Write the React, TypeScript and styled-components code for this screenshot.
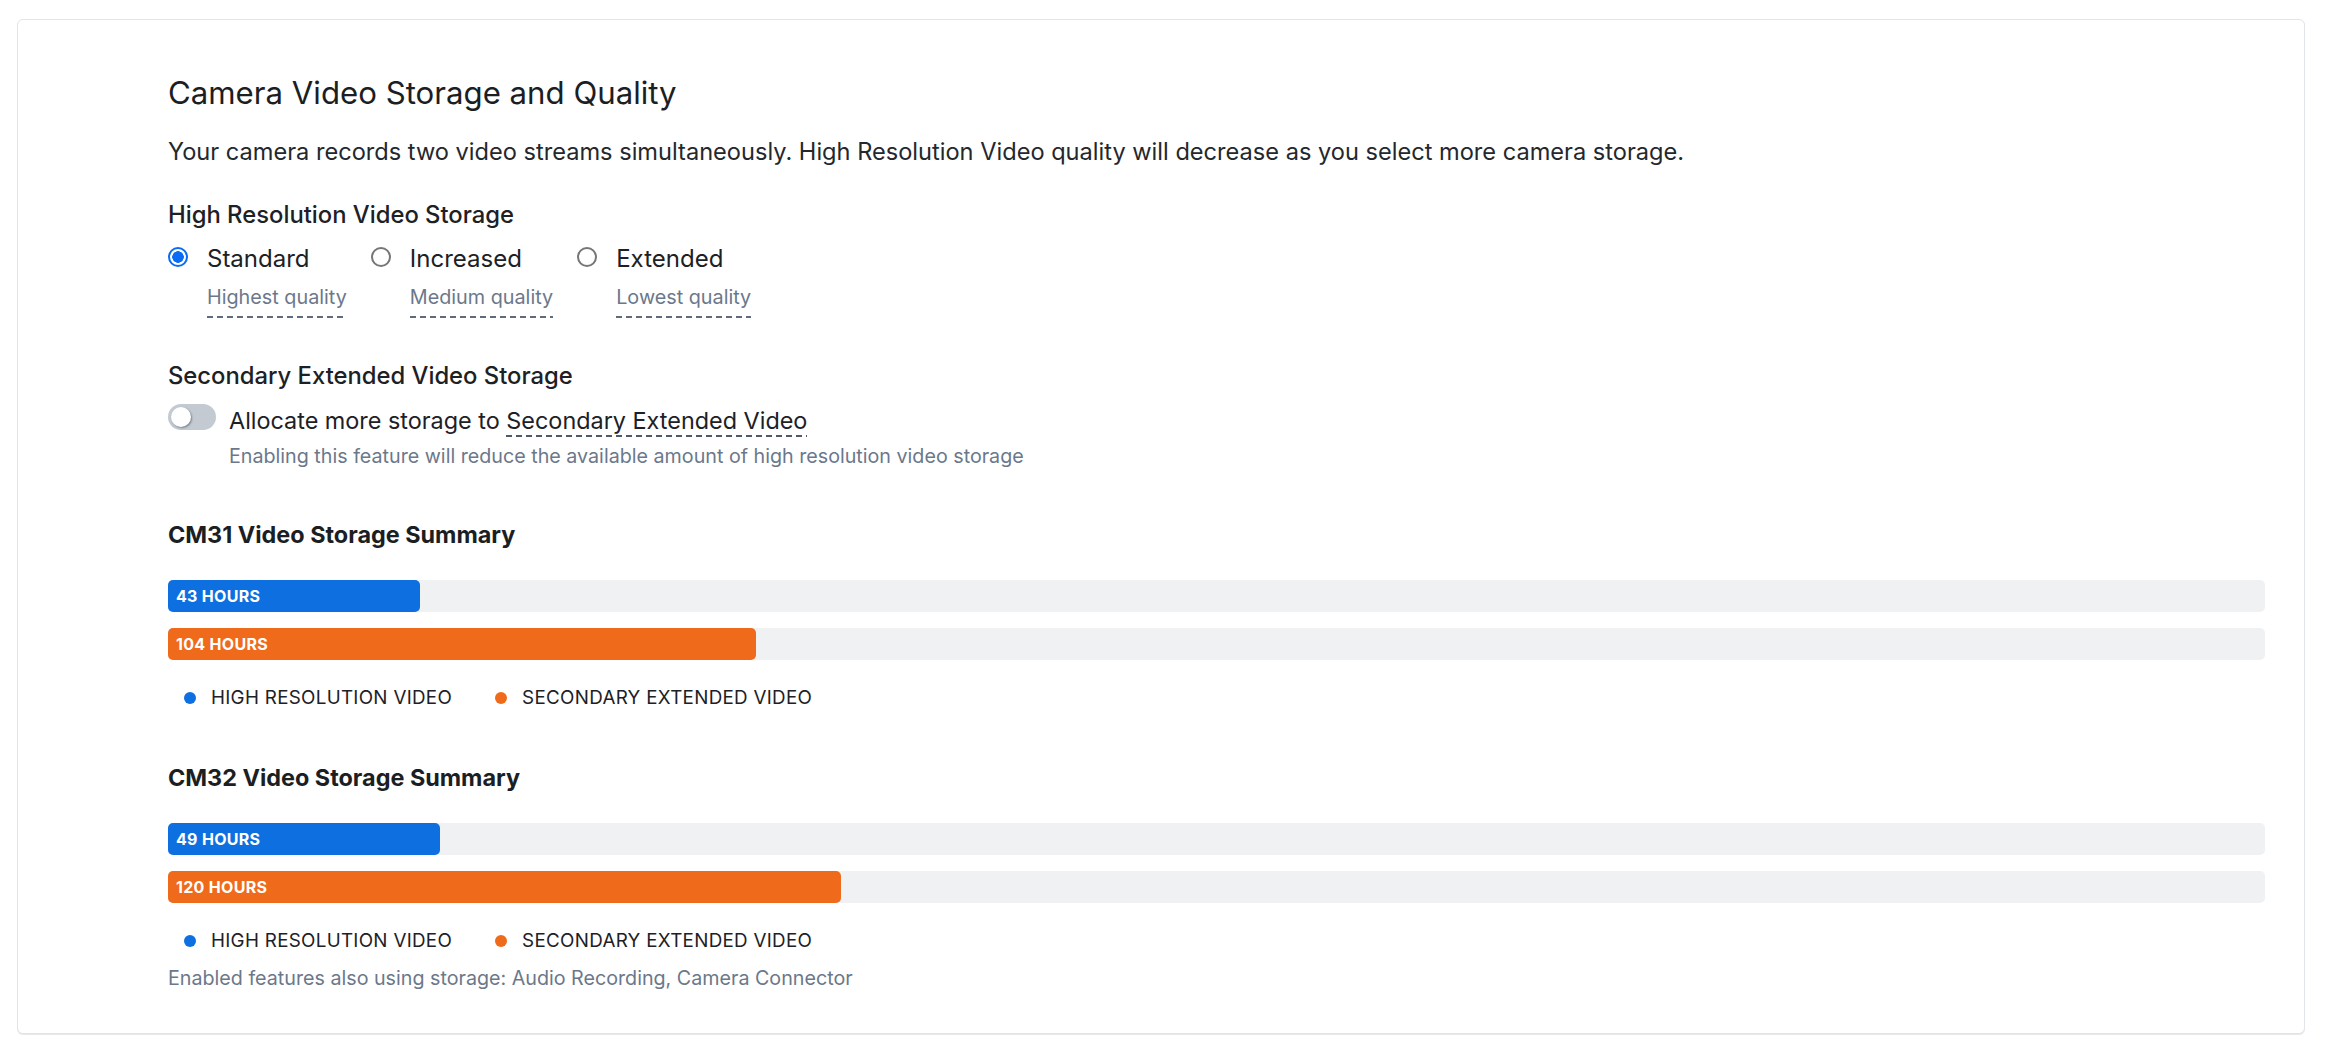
import React, { useState } from 'react';
import styled, { createGlobalStyle } from 'styled-components';

const GlobalStyle = createGlobalStyle`
  html, body {
    margin: 0;
    padding: 0;
    background: #ffffff;
  }
  body {
    font-family: Inter, "Noto Sans", "Liberation Sans", sans-serif;
    color: #1d2126;
    -webkit-font-smoothing: antialiased;
  }
  * {
    box-sizing: border-box;
  }
`;

const Page = styled.div`
  padding: 19px 23px 16px 17px;
`;

const Card = styled.section`
  background: #fff;
  border: 1px solid #e1e4e8;
  border-radius: 6px;
  box-shadow: 0 1px 0 #e6e8eb;
  padding: 53px 39px 42px 150px;
`;

const Title = styled.h1`
  margin: 0;
  font-size: 31.2px;
  line-height: 40px;
  font-weight: 400;
  color: #1b1e22;
`;

const Intro = styled.p`
  margin: 24px 0 0;
  font-size: 23.6px;
  line-height: 30px;
  color: #24282d;
`;

const SectionTitle = styled.h2<{ $top: number }>`
  margin: ${({ $top }) => $top}px 0 0;
  font-size: 23.8px;
  line-height: 28px;
  font-weight: 500;
  color: #1d2126;
`;

const RadioGroup = styled.div`
  display: flex;
  gap: 24px;
  margin-top: 15px;
`;

const RadioOption = styled.label`
  display: flex;
  align-items: flex-start;
  gap: 19px;
  cursor: pointer;
`;

const RadioMark = styled.span<{ $checked: boolean }>`
  flex: none;
  width: 20px;
  height: 20px;
  margin-top: 3px;
  border-radius: 50%;
  border: 2px solid ${({ $checked }) => ($checked ? '#0a6cf5' : '#767676')};
  background: ${({ $checked }) =>
    $checked ? 'radial-gradient(circle, #0a6cf5 0 5.5px, #fff 6px)' : '#fff'};
`;

const RadioText = styled.span`
  display: flex;
  flex-direction: column;
  align-items: flex-start;
`;

const RadioLabel = styled.span`
  font-size: 24px;
  line-height: 30px;
  color: #1d2126;
`;

const Hint = styled.span`
  margin-top: 10px;
  padding-bottom: 8px;
  font-size: 19.8px;
  line-height: 26px;
  color: #6b788b;
  background-image: linear-gradient(to right, #5f6b7d 65%, transparent 0);
  background-size: 10px 2px;
  background-repeat: repeat-x;
  background-position: left bottom;
`;

const ToggleRow = styled.div`
  display: flex;
  align-items: flex-start;
  gap: 13px;
  margin-top: 14px;
`;

const Switch = styled.button<{ $on: boolean }>`
  position: relative;
  flex: none;
  width: 48px;
  height: 26px;
  padding: 0;
  border: none;
  border-radius: 13px;
  background: ${({ $on }) => ($on ? '#0a6cf5' : '#c3cad2')};
  cursor: pointer;

  &::after {
    content: '';
    position: absolute;
    top: 3px;
    left: ${({ $on }) => ($on ? '25px' : '3px')};
    width: 20px;
    height: 20px;
    border-radius: 50%;
    background: #fff;
    box-shadow: 1px 1px 2px rgba(30, 40, 55, 0.45);
  }
`;

const ToggleText = styled.div`
  display: flex;
  flex-direction: column;
  padding-top: 3px;
`;

const ToggleLabel = styled.span`
  font-size: 23.4px;
  line-height: 28px;
  color: #1d2126;
`;

const DashedTerm = styled.span`
  display: inline-block;
  padding-bottom: 2px;
  background-image: linear-gradient(to right, #4e596a 65%, transparent 0);
  background-size: 10px 2px;
  background-repeat: repeat-x;
  background-position: left bottom;
`;

const Helper = styled.span`
  margin-top: 7px;
  font-size: 19.7px;
  line-height: 24px;
  color: #6b788b;
`;

const Summary = styled.div<{ $top: number }>`
  margin-top: ${({ $top }) => $top}px;
`;

const SummaryTitle = styled.h3`
  margin: 0;
  font-size: 23.4px;
  line-height: 28px;
  font-weight: 700;
  color: #1b1e22;
`;

const Bars = styled.div`
  display: flex;
  flex-direction: column;
  gap: 16px;
  margin-top: 31px;
`;

const Track = styled.div`
  height: 32px;
  border-radius: 5px;
  background: #f0f1f3;
`;

const Fill = styled.div<{ $color: string }>`
  height: 100%;
  display: flex;
  align-items: center;
  padding-left: 8px;
  border-radius: 5px;
  background: ${({ $color }) => $color};
  color: #fff;
  font-size: 16px;
  font-weight: 700;
  letter-spacing: 0.3px;
  white-space: nowrap;
`;

const Legend = styled.div`
  display: flex;
  align-items: center;
  gap: 43px;
  margin-top: 26px;
  padding-left: 16px;
`;

const LegendItem = styled.span`
  display: flex;
  align-items: center;
  gap: 15px;
  font-size: 18.8px;
  line-height: 24px;
  letter-spacing: 0.3px;
  text-transform: uppercase;
  color: #1d2126;
`;

const Dot = styled.span<{ $color: string }>`
  width: 12px;
  height: 12px;
  border-radius: 50%;
  background: ${({ $color }) => $color};
`;

const Footnote = styled.p`
  margin: 12px 0 0;
  font-size: 19.7px;
  line-height: 26px;
  color: #6b788b;
`;

const BLUE = '#0e6fe0';
const ORANGE = '#f06a1b';

const qualities = [
  { id: 'standard', label: 'Standard', hint: 'Highest quality' },
  { id: 'increased', label: 'Increased', hint: 'Medium quality' },
  { id: 'extended', label: 'Extended', hint: 'Lowest quality' },
];

const cameras = [
  { name: 'CM31', high: 43, highPct: 12.01, secondary: 104, secondaryPct: 28.03, top: 53 },
  { name: 'CM32', high: 49, highPct: 12.96, secondary: 120, secondaryPct: 32.08, top: 54 },
];

const App = () => {
  const [quality, setQuality] = useState('standard');
  const [allocate, setAllocate] = useState(false);

  return (
    <>
      <GlobalStyle />
      <Page>
        <Card>
          <Title>Camera Video Storage and Quality</Title>
          <Intro>
            Your camera records two video streams simultaneously. High Resolution Video quality will
            decrease as you select more camera storage.
          </Intro>

          <SectionTitle $top={34}>High Resolution Video Storage</SectionTitle>
          <RadioGroup role="radiogroup">
            {qualities.map((q) => (
              <RadioOption key={q.id} onClick={() => setQuality(q.id)}>
                <RadioMark $checked={quality === q.id} role="radio" aria-checked={quality === q.id} />
                <RadioText>
                  <RadioLabel>{q.label}</RadioLabel>
                  <Hint>{q.hint}</Hint>
                </RadioText>
              </RadioOption>
            ))}
          </RadioGroup>

          <SectionTitle $top={44}>Secondary Extended Video Storage</SectionTitle>
          <ToggleRow>
            <Switch $on={allocate} onClick={() => setAllocate(!allocate)} aria-pressed={allocate} />
            <ToggleText>
              <ToggleLabel>
                Allocate more storage to <DashedTerm>Secondary Extended Video</DashedTerm>
              </ToggleLabel>
              <Helper>Enabling this feature will reduce the available amount of high resolution video storage</Helper>
            </ToggleText>
          </ToggleRow>

          {cameras.map((cam) => (
            <Summary key={cam.name} $top={cam.top}>
              <SummaryTitle>{cam.name} Video Storage Summary</SummaryTitle>
              <Bars>
                <Track>
                  <Fill $color={BLUE} style={{ width: `${cam.highPct}%` }}>
                    {cam.high} HOURS
                  </Fill>
                </Track>
                <Track>
                  <Fill $color={ORANGE} style={{ width: `${cam.secondaryPct}%` }}>
                    {cam.secondary} HOURS
                  </Fill>
                </Track>
              </Bars>
              <Legend>
                <LegendItem>
                  <Dot $color={BLUE} />
                  High Resolution Video
                </LegendItem>
                <LegendItem>
                  <Dot $color={ORANGE} />
                  Secondary Extended Video
                </LegendItem>
              </Legend>
            </Summary>
          ))}

          <Footnote>Enabled features also using storage: Audio Recording, Camera Connector</Footnote>
        </Card>
      </Page>
    </>
  );
};

export default App;
